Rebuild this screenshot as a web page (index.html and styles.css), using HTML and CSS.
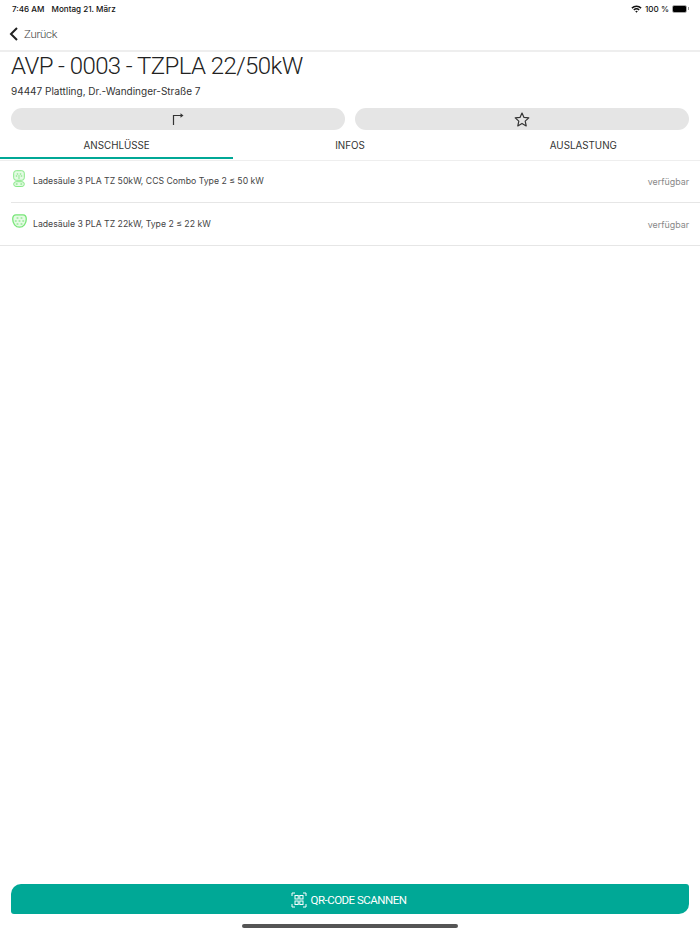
FILE: index.html
```html
<!DOCTYPE html>
<html lang="de">
<head>
    <meta charset="UTF-8">
    <meta name="viewport" content="width=device-width, initial-scale=1.0">
    <title>AVP - 0003 - TZPLA 22/50kW</title>
    <link rel="stylesheet" href="styles.css">
</head>
<body>
    <div class="screen">
        <div class="status-bar">
            <span class="status-time">7:46 AM</span>
            <span class="status-date">Montag 21. März</span>
            <span class="status-right">
                <svg class="wifi" width="11" height="8" viewBox="0 0 11 8">
                    <path d="M0.4 2.6A7.4 7.4 0 0 1 10.6 2.6L9.6 3.7A6 6 0 0 0 1.4 3.7Z" fill="#111"/>
                    <path d="M2.3 4.5A4.7 4.7 0 0 1 8.7 4.5L7.7 5.5A3.3 3.3 0 0 0 3.3 5.5Z" fill="#111"/>
                    <path d="M4.2 6.3A1.9 1.9 0 0 1 6.8 6.3L5.5 7.8Z" fill="#111"/>
                </svg>
                <span>100 %</span>
                <span class="battery"><span class="battery-fill"></span></span>
                <span class="battery-tip"></span>
            </span>
        </div>
        <div class="nav-bar">
            <svg width="10" height="14" viewBox="0 0 10 14">
                <path d="M8 1L2 7L8 13" fill="none" stroke="#222" stroke-width="2"/>
            </svg>
            <span class="back-label">Zurück</span>
        </div>
        <div class="station">
            <h1>AVP - 0003 - TZPLA 22/50kW</h1>
            <p class="address">94447 Plattling, Dr.-Wandinger-Straße 7</p>
            <div class="actions">
                <button class="action" type="button">
                    <svg width="12" height="12" viewBox="0 0 12 12">
                        <path d="M1.500 12V2.500H9" fill="none" stroke="#333" stroke-width="1.200"/>
                        <path d="M8.500 0.300L11.500 2.500L8.500 4.700Z" fill="#333"/>
                    </svg>
                </button>
                <button class="action" type="button">
                    <svg width="16" height="15" viewBox="0 0 16 15">
                        <path d="M8 1L10 5.400L14.800 5.900L11.200 9.100L12.200 13.900L8 11.400L3.800 13.900L4.800 9.100L1.200 5.900L6 5.400Z" fill="none" stroke="#333" stroke-width="1.200" stroke-linejoin="round"/>
                    </svg>
                </button>
            </div>
        </div>
        <div class="tabs">
            <div class="tab active">ANSCHLÜSSE</div>
            <div class="tab">INFOS</div>
            <div class="tab">AUSLASTUNG</div>
        </div>
        <div class="connectors">
            <div class="connector">
                <svg class="plug plug-combo" width="12" height="17" viewBox="0 0 12 17">
                    <rect x="0.700" y="0.700" width="10.600" height="9.600" rx="2.500" fill="#e4fbe4" stroke="#86e886"/>
                    <circle cx="4.500" cy="4" r="0.900" fill="#a5eca5"/>
                    <circle cx="7.500" cy="4" r="0.900" fill="#a5eca5"/>
                    <circle cx="3.500" cy="6" r="0.900" fill="#a5eca5"/>
                    <circle cx="6" cy="6" r="0.900" fill="#a5eca5"/>
                    <circle cx="8.500" cy="6" r="0.900" fill="#a5eca5"/>
                    <circle cx="6" cy="8" r="0.900" fill="#a5eca5"/>
                    <rect x="0.700" y="11.700" width="10.600" height="4.800" rx="2.400" fill="#e4fbe4" stroke="#86e886"/>
                    <circle cx="3.700" cy="14.100" r="1.100" fill="#a5eca5"/>
                    <circle cx="8.300" cy="14.100" r="1.100" fill="#a5eca5"/>
                </svg>
                <span class="connector-name">Ladesäule 3 PLA TZ 50kW, CCS Combo Type 2 ≤ 50 kW</span>
                <span class="connector-state">verfügbar</span>
            </div>
            <div class="connector">
                <svg class="plug plug-type2" width="15" height="14" viewBox="0 0 15 14">
                    <path d="M4 0.800H11C13 0.800 14.300 2.300 14.300 5C14.300 9.500 11.500 13.200 7.500 13.200C3.500 13.200 0.700 9.500 0.700 5C0.700 2.300 2 0.800 4 0.800Z" fill="#e4fbe4" stroke="#78e678" stroke-width="1.300"/>
                    <circle cx="5.500" cy="4" r="1.100" fill="#a5eca5"/>
                    <circle cx="9.500" cy="4" r="1.100" fill="#a5eca5"/>
                    <circle cx="3.800" cy="7" r="1.100" fill="#a5eca5"/>
                    <circle cx="7.500" cy="7" r="1.100" fill="#a5eca5"/>
                    <circle cx="11.200" cy="7" r="1.100" fill="#a5eca5"/>
                    <circle cx="5.500" cy="10" r="1.100" fill="#a5eca5"/>
                    <circle cx="9.500" cy="10" r="1.100" fill="#a5eca5"/>
                </svg>
                <span class="connector-name">Ladesäule 3 PLA TZ 22kW, Type 2 ≤ 22 kW</span>
                <span class="connector-state">verfügbar</span>
            </div>
        </div>
        <div class="footer">
            <button class="scan" type="button">
                <svg width="16" height="16" viewBox="0 0 16 16">
                    <path d="M1 4V1H4M12 1H15V4M15 12V15H12M4 15H1V12" fill="none" stroke="#fff" stroke-width="1"/>
                    <rect x="4" y="3.500" width="3.200" height="3.500" fill="none" stroke="#fff"/>
                    <rect x="8.800" y="3.500" width="3.200" height="3.500" fill="none" stroke="#fff"/>
                    <rect x="4" y="9" width="3.200" height="3.500" fill="none" stroke="#fff"/>
                    <rect x="8.800" y="9" width="3.200" height="3.500" fill="none" stroke="#fff"/>
                </svg>
                QR-CODE SCANNEN
            </button>
            <div class="home-indicator"></div>
        </div>
    </div>
</body>
</html>
```

FILE: styles.css
```css
html, body {
    margin: 0;
    padding: 0;
    background: #fff;
}
body {
    font-family: Inter, "Liberation Sans", sans-serif;
    color: #333;
}
.screen {
    width: 700px;
    height: 934px;
    display: flex;
    flex-direction: column;
    overflow: hidden;
}
.status-bar {
    height: 17px;
    padding: 0 11px 0 12px;
    display: flex;
    align-items: center;
    font-size: 8.1px;
    font-weight: 500;
    color: #111;
}
.status-date {
    margin-left: 7px;
}
.status-right {
    margin-left: auto;
    display: flex;
    align-items: center;
    gap: 3px;
}
.battery {
    width: 13px;
    height: 6px;
    margin-right: -2px;
    border: 1px solid #aaa;
    border-radius: 2px;
    display: block;
}
.battery-fill {
    display: block;
    width: 100%;
    height: 100%;
    background: #000;
    border-radius: 1px;
}
.battery-tip {
    width: 1px;
    height: 3px;
    background: #999;
}
.nav-bar {
    height: 33px;
    padding-left: 9px;
    display: flex;
    align-items: center;
    gap: 5px;
    border-bottom: 2px solid #eee;
}
.back-label {
    font-family: Roboto, sans-serif;
    font-size: 11.5px;
    font-weight: 300;
    letter-spacing: -0.3px;
    color: #444;
}
.station {
    padding: 0 11px;
}
h1 {
    margin: 0;
    height: 30px;
    line-height: 28px;
    font-family: Roboto, sans-serif;
    font-size: 24px;
    font-weight: 300;
    letter-spacing: -0.58px;
    color: #222;
}
.address {
    margin: 0;
    height: 26px;
    line-height: 18px;
    font-size: 10px;
    color: #333;
}
.actions {
    display: flex;
    gap: 10px;
}
.action {
    flex: 1;
    height: 22px;
    padding: 0;
    border: none;
    border-radius: 11px;
    background: #e5e5e5;
    display: flex;
    align-items: center;
    justify-content: center;
}
.tabs {
    display: flex;
    height: 30px;
    border-bottom: 1px solid #eee;
}
.tab {
    flex: 1;
    text-align: center;
    line-height: 31px;
    font-size: 9.8px;
    color: #333;
}
.tab.active {
    border-bottom: 2px solid #00a896;
    height: 27px;
}
.connectors {
    margin-top: -1px;
}
.connector {
    height: 42px;
    margin-left: 11px;
    padding-right: 11px;
    display: flex;
    align-items: center;
    border-bottom: 1px solid #e6e6e6;
    font-size: 8.7px;
    color: #444;
}
.connector:last-child {
    margin-left: 0;
    padding-left: 11px;
}
.plug {
    flex-shrink: 0;
}
.plug-combo {
    margin: -5px 8px 0 2px;
}
.plug-type2 {
    margin: -6px 6px 0 1px;
}
.connector-state {
    margin-left: auto;
    color: #888;
    font-size: 8.9px;
}
.footer {
    margin-top: auto;
    padding: 0 11px;
}
.scan {
    width: 100%;
    height: 30px;
    padding: 1px 3px 0 0;
    border: none;
    border-radius: 10px 3px 10px 3px;
    background: #00a896;
    color: #fff;
    font-family: Roboto, sans-serif;
    font-size: 11.5px;
    letter-spacing: -0.5px;
    display: flex;
    align-items: center;
    justify-content: center;
    gap: 4px;
}
.home-indicator {
    width: 216px;
    height: 4px;
    margin: 10px auto 6px;
    border-radius: 2px;
    background: #555;
}
```
